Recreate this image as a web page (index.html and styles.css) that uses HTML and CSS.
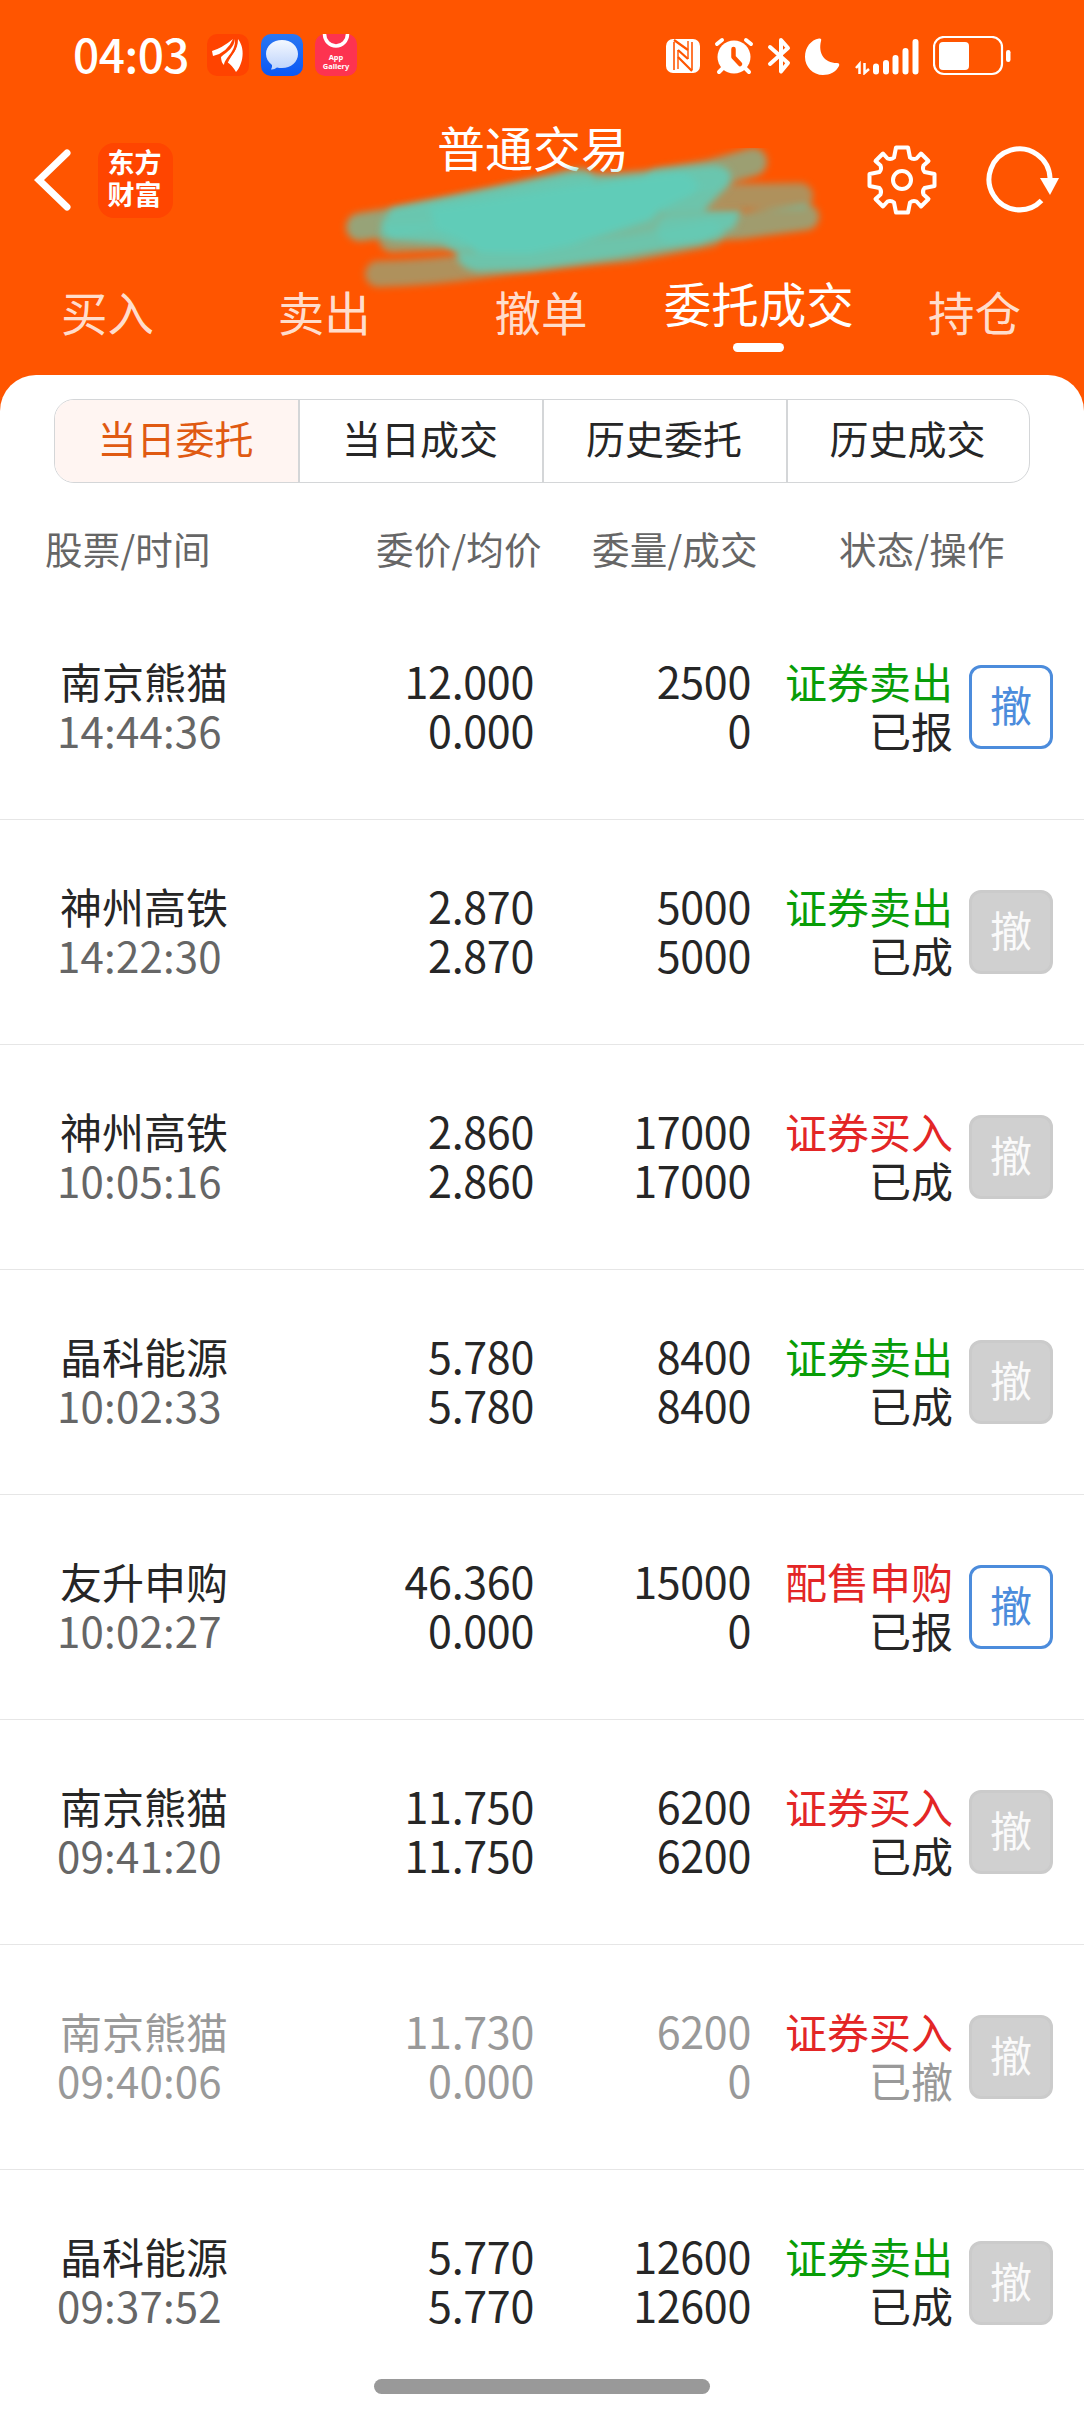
FILE: index.html
```html
<!DOCTYPE html>
<html lang="zh-CN">
<head>
    <meta charset="UTF-8">
    <title>普通交易</title>
    <link rel="stylesheet" href="styles.css">
</head>
<body>
    <header class="header">
        <!-- Status bar -->
        <div class="status-bar">
            <span class="clock">04:03</span>
            <div class="app-icons">
                <svg width="42" height="42" viewBox="0 0 42 42">
                    <rect width="42" height="42" rx="10" fill="#ff4300"/>
                    <g fill="#fff">
                        <path d="M5 17Q15 14 26 5Q20 19 6 22Z"/>
                        <path d="M28 5C27 14 21 17 14 23Q14 28 17 31C18 23 29 18 28 5Z"/>
                        <path d="M31 5C31 17 24 21 20 28Q25 31 29 38C34 33 40 17 31 5Z"/>
                    </g>
                    <path d="M29.500 5C30 17 23 21 20 29" fill="none" stroke="#ff4300" stroke-width="1.200"/>
                </svg>
                <svg width="42" height="42" viewBox="0 0 42 42">
                    <defs>
                        <linearGradient id="msgBg" x1="0" y1="0" x2="0" y2="1">
                            <stop offset="0" stop-color="#2b77f2"/>
                            <stop offset="1" stop-color="#0a57f5"/>
                        </linearGradient>
                        <linearGradient id="msgBubble" x1="0" y1="0" x2="0" y2="1">
                            <stop offset="0" stop-color="#f4f8ff"/>
                            <stop offset="1" stop-color="#bdd3fb"/>
                        </linearGradient>
                    </defs>
                    <rect width="42" height="42" rx="10" fill="url(#msgBg)"/>
                    <path d="M21 6C30 6 37 12 37 20S30 34 21 34Q18 34 16 33.500Q13 36 10 35.500Q11.500 33 11 31C7 28 5 24 5 20C5 12 12 6 21 6Z" fill="url(#msgBubble)"/>
                </svg>
                <svg width="42" height="42" viewBox="0 0 42 42">
                    <rect width="42" height="42" rx="10" fill="#fd3350"/>
                    <path d="M9.500 0A11.500 12 0 0 0 32.500 0" fill="none" stroke="#fff" stroke-width="3.500"/>
                    <text class="gallery-text" x="21" y="26">App</text>
                    <text class="gallery-text" x="21" y="35">Gallery</text>
                </svg>
            </div>
            <div class="system-icons">
                <!-- NFC -->
                <svg width="34" height="34" viewBox="0 0 34 34">
                    <rect width="34" height="34" rx="7" fill="#fff"/>
                    <path d="M8 3V31M26 3V31" fill="none" stroke="#ff5500" stroke-width="1.600"/>
                    <path d="M8 1L22 11M12 11L22 20M12 18L26 32" fill="none" stroke="#ff5500" stroke-width="2.200"/>
                    <path d="M12 11V30M22 2V20" fill="none" stroke="#ff5500" stroke-width="1.400"/>
                </svg>
                <!-- Alarm -->
                <svg class="alarm" width="40" height="38" viewBox="0 0 40 38">
                    <circle cx="20" cy="20" r="16.500" fill="#fff"/>
                    <path d="M3 7L8 3M37 7L32 3M9 31L5 35M31 31L35 35" stroke="#fff" stroke-width="4" stroke-linecap="round"/>
                    <path d="M19.500 12V20L26 27" fill="none" stroke="#ff5500" stroke-width="4.500" stroke-linecap="round" stroke-linejoin="round"/>
                </svg>
                <!-- Bluetooth -->
                <svg class="bluetooth" width="24" height="38" viewBox="0 0 24 38">
                    <path d="M3 10L21 26L14 34.500V3L21 11L3 27" fill="none" stroke="#fff" stroke-width="4" stroke-linecap="round" stroke-linejoin="round"/>
                </svg>
                <!-- Do not disturb -->
                <svg class="moon" width="35" height="37" viewBox="0 0 35 37">
                    <path d="M14 .5Q17 0 16 3C13 15 19 25 32 25Q35 25 34 28C31 34 25 37 18 37C8 37 0 29 0 19C0 9 6 2 14 .5Z" fill="#fff"/>
                </svg>
                <!-- Signal -->
                <svg class="signal" width="65" height="37" viewBox="0 0 65 37">
                    <path d="M21 28.500V33.500M31 25V33.500M40.500 20V33.500M50.500 13V33.500M60.500 4V33.500" stroke="#fff" stroke-width="6" stroke-linecap="round"/>
                    <path d="M1 30L4.500 26V36M9.500 25V35L14 31" fill="none" stroke="#fff" stroke-width="2.500"/>
                </svg>
                <!-- Battery -->
                <svg class="battery" width="78" height="40" viewBox="0 0 78 40">
                    <rect x="1" y="1" width="68" height="37" rx="10" fill="none" stroke="#fff" stroke-width="2.200"/>
                    <rect x="6" y="6" width="30" height="28" rx="4" fill="#fff"/>
                    <rect x="73" y="14" width="4.500" height="12" rx="2.200" fill="#fff"/>
                </svg>
            </div>
        </div>

        <!-- Title bar -->
        <div class="title-bar">
            <div class="title-left">
                <svg width="38" height="64" viewBox="0 0 38 64">
                    <path d="M33 5L5 32L33 59" fill="none" stroke="#fff" stroke-width="7" stroke-linecap="round" stroke-linejoin="miter"/>
                </svg>
                <div class="brand">东方<br>财富</div>
            </div>
            <h1 class="title">普通交易</h1>
            <div class="title-right">
                <svg width="70" height="70" viewBox="-35 -35 70 70" fill="none" stroke="#fff" stroke-width="4" stroke-linejoin="round">
                    <circle r="9"/>
                    <path d="M-6 -32.500H6L8 -22.500Q11 -20 14.500 -21.500L19 -26.500L26.500 -19L21.500 -14.500Q20 -11 22.500 -8L32.500 -6V6L22.500 8Q20 11 21.500 14.500L26.500 19L19 26.500L14.500 21.500Q11 20 8 22.500L6 32.500H-6L-8 22.500Q-11 20 -14.500 21.500L-19 26.500L-26.500 19L-21.500 14.500Q-20 11 -22.500 8L-32.500 6V-6L-22.500 -8Q-20 -11 -21.500 -14.500L-26.500 -19L-19 -26.500L-14.500 -21.500Q-11 -20 -8 -22.500Z"/>
                </svg>
                <svg width="76" height="70" viewBox="-34 -35 76 70">
                    <path d="M22.500 20.500A30.500 30.500 0 1 1 31 -2" fill="none" stroke="#fff" stroke-width="5"/>
                    <path d="M21 -2H40L31 15Z" fill="#fff"/>
                </svg>
            </div>
        </div>

        <!-- Main tabs -->
        <nav class="tabs">
            <a class="tab">买入</a>
            <a class="tab">卖出</a>
            <a class="tab">撤单</a>
            <a class="tab active">委托成交</a>
            <a class="tab">持仓</a>
        </nav>

        <!-- Brush marks over the account name -->
        <svg class="brush" width="500" height="150" viewBox="0 0 500 150">
            <defs>
                <filter id="soft" x="-10%" y="-30%" width="120%" height="160%">
                    <feGaussianBlur stdDeviation="3.500"/>
                </filter>
            </defs>
            <g fill="none" stroke="#60ccb8" stroke-linecap="round" stroke-linejoin="round" filter="url(#soft)">
                <path d="M48 126Q100 125 160 116T300 101L380 86" stroke-width="26" opacity=".5"/>
                <path d="M30 79Q110 68 250 34" stroke-width="28" opacity=".65"/>
                <path d="M330 34L380 26L423 14" stroke-width="28" opacity=".62"/>
                <path d="M62 91L130 88" stroke-width="26" opacity=".6"/>
                <path d="M340 52L400 49L470 48" stroke-width="26" opacity=".5"/>
                <path d="M340 82L410 78L476 69" stroke-width="26" opacity=".6"/>
            </g>
            <g fill="#60ccb8" filter="url(#soft)">
                <path d="M62 60L133 46L240 25L280 26L384 17Q408 20 398 38L384 52L374 62L412 62L404 80L370 96L290 110L200 122L148 124Q126 120 126 104L112 96L62 92Q48 82 52 74Z" opacity=".85"/>
                <path d="M100 60L150 53L240 38L350 24Q376 32 362 46L330 62L320 72L240 98L200 106L150 106L130 92L106 82Z"/>
            </g>
        </svg>
    </header>

    <main class="panel">
        <div class="segments">
            <div class="segment selected">当日委托</div>
            <div class="segment">当日成交</div>
            <div class="segment">历史委托</div>
            <div class="segment">历史成交</div>
        </div>

        <div class="table-head">
            <span>股票/时间</span>
            <span>委价/均价</span>
            <span>委量/成交</span>
            <span>状态/操作</span>
        </div>

        <div class="orders">
            <div class="order">
                <div class="name">南京熊猫<br><span class="time">14:44:36</span></div>
                <div class="num">12.000<br>0.000</div>
                <div class="num">2500<br>0</div>
                <div class="state"><span class="sell">证券卖出</span><br>已报</div>
                <button class="cancel">撤</button>
            </div>
            <div class="order">
                <div class="name">神州高铁<br><span class="time">14:22:30</span></div>
                <div class="num">2.870<br>2.870</div>
                <div class="num">5000<br>5000</div>
                <div class="state"><span class="sell">证券卖出</span><br>已成</div>
                <button class="cancel" disabled>撤</button>
            </div>
            <div class="order">
                <div class="name">神州高铁<br><span class="time">10:05:16</span></div>
                <div class="num">2.860<br>2.860</div>
                <div class="num">17000<br>17000</div>
                <div class="state"><span class="buy">证券买入</span><br>已成</div>
                <button class="cancel" disabled>撤</button>
            </div>
            <div class="order">
                <div class="name">晶科能源<br><span class="time">10:02:33</span></div>
                <div class="num">5.780<br>5.780</div>
                <div class="num">8400<br>8400</div>
                <div class="state"><span class="sell">证券卖出</span><br>已成</div>
                <button class="cancel" disabled>撤</button>
            </div>
            <div class="order">
                <div class="name">友升申购<br><span class="time">10:02:27</span></div>
                <div class="num">46.360<br>0.000</div>
                <div class="num">15000<br>0</div>
                <div class="state"><span class="buy">配售申购</span><br>已报</div>
                <button class="cancel">撤</button>
            </div>
            <div class="order">
                <div class="name">南京熊猫<br><span class="time">09:41:20</span></div>
                <div class="num">11.750<br>11.750</div>
                <div class="num">6200<br>6200</div>
                <div class="state"><span class="buy">证券买入</span><br>已成</div>
                <button class="cancel" disabled>撤</button>
            </div>
            <div class="order revoked">
                <div class="name">南京熊猫<br><span class="time">09:40:06</span></div>
                <div class="num">11.730<br>0.000</div>
                <div class="num">6200<br>0</div>
                <div class="state"><span class="buy">证券买入</span><br>已撤</div>
                <button class="cancel" disabled>撤</button>
            </div>
            <div class="order">
                <div class="name">晶科能源<br><span class="time">09:37:52</span></div>
                <div class="num">5.770<br>5.770</div>
                <div class="num">12600<br>12600</div>
                <div class="state"><span class="sell">证券卖出</span><br>已成</div>
                <button class="cancel" disabled>撤</button>
            </div>
        </div>
    </main>

    <div class="home-bar"></div>
</body>
</html>
```
FILE: styles.css
```css
* {
    box-sizing: border-box;
}

body {
    position: relative;
    margin: 0;
    width: 1084px;
    height: 2412px;
    overflow: hidden;
    background-color: #ff5500;
    color: #262626;
    font-family: "Noto Sans CJK SC", sans-serif;
}

svg {
    display: block;
    flex-shrink: 0;
}

.header {
    position: relative;
    height: 375px;
    color: #fff;
}

/* Status bar */
.status-bar {
    display: flex;
    align-items: center;
    height: 112px;
    padding: 0 73px 0 73px;
}

.clock {
    width: 134px;
    margin-bottom: 6px;
    font-size: 46px;
    font-weight: 500;
    letter-spacing: -0.5px;
    line-height: 60px;
}

.app-icons {
    display: flex;
    gap: 12px;
    margin-bottom: 2px;
}

.gallery-text {
    fill: #fff;
    font-family: "Noto Sans", sans-serif;
    font-size: 7.5px;
    font-weight: 700;
    text-anchor: middle;
}

.system-icons {
    display: flex;
    align-items: center;
    margin-left: auto;
}

.alarm {
    margin-left: 14px;
}

.bluetooth {
    margin-left: 13px;
}

.moon {
    margin-left: 14px;
}

.signal {
    margin-left: 15px;
}

.battery {
    margin-left: 13px;
}

/* Title bar */
.title-bar {
    display: grid;
    grid-template-columns: 400px 1fr 418px;
    height: 136px;
}

.title-left {
    display: flex;
    align-items: center;
    gap: 26px;
    padding-left: 34px;
}

.brand {
    width: 75px;
    height: 75px;
    padding: 3px 2px 0 0;
    border-radius: 16px;
    background-color: #ff4500;
    font-size: 27px;
    font-weight: 700;
    line-height: 32px;
    text-align: center;
}

.title {
    margin: 0;
    font-size: 48px;
    font-weight: 400;
    line-height: 68px;
    text-align: center;
}

.title-right {
    display: flex;
    align-items: center;
    justify-content: flex-end;
    gap: 48px;
    padding-right: 23px;
}

/* Tabs */
.tabs {
    display: grid;
    grid-template-columns: repeat(5, 1fr);
    height: 127px;
}

.tab {
    padding: 30px 2px 0 0;
    color: #ffddcc;
    font-size: 46.5px;
    line-height: 66px;
    text-align: center;
}

.tab.active {
    padding: 22px 0 0;
    color: #fff;
    font-size: 47.5px;
}

.tab.active::after {
    content: "";
    display: block;
    width: 51px;
    height: 9px;
    margin: 7px auto 0;
    border-radius: 5px;
    background-color: #fff;
}

.brush {
    position: absolute;
    left: 330px;
    top: 148px;
}

/* White panel */
.panel {
    height: 2037px;
    padding-top: 24px;
    border-radius: 36px 36px 0 0;
    background-color: #fff;
}

.segments {
    display: grid;
    grid-template-columns: 243px 244px 244px 1fr;
    width: 976px;
    height: 84px;
    margin: 0 auto;
    overflow: hidden;
    border: 1px solid #d4d6d8;
    border-radius: 20px;
}

.segment {
    padding-right: 2px;
    border-left: 2px solid #d4d6d8;
    font-size: 39px;
    line-height: 75px;
    text-align: center;
}

.segment.selected {
    border-left: none;
    background-color: #fff5f2;
    color: #e05a12;
}

.table-head {
    display: grid;
    grid-template-columns: 331px 216px 247px 1fr;
    height: 112px;
    padding-left: 45px;
    color: #666;
    font-size: 37.5px;
    letter-spacing: 0.2px;
    line-height: 130px;
}

/* Orders */
.order {
    display: grid;
    grid-template-columns: 240px 236px 217px 202px 84px;
    align-items: center;
    height: 225px;
    padding-left: 58px;
    border-bottom: 1px solid #e6e6e6;
    font-size: 42px;
    line-height: 49px;
}

.order:last-child {
    border-bottom: none;
}

.name,
.num,
.state {
    padding-bottom: 5px;
}

.name {
    padding-left: 2px;
}

.time {
    margin-left: -3px;
    color: #666;
    letter-spacing: 0.2px;
}

.num,
.state {
    text-align: right;
}

.num {
    font-size: 43px;
    letter-spacing: -0.3px;
}

.sell {
    color: #089d08;
}

.buy {
    color: #e32626;
}

.revoked,
.revoked .time {
    color: #999;
}

.cancel {
    width: 84px;
    height: 84px;
    margin-left: 16px;
    padding: 0 0 6px;
    border: 3px solid #4c8cdc;
    border-radius: 12px;
    background-color: #fff;
    color: #4c8cdc;
    font-family: inherit;
    font-size: 42px;
    line-height: 60px;
}

.cancel:disabled {
    border-color: #cbcbcb;
    background-color: #d0d0d0;
    color: #fafafa;
}

.home-bar {
    position: absolute;
    left: 374px;
    bottom: 18px;
    width: 336px;
    height: 15px;
    border-radius: 8px;
    background-color: #999;
}
```
